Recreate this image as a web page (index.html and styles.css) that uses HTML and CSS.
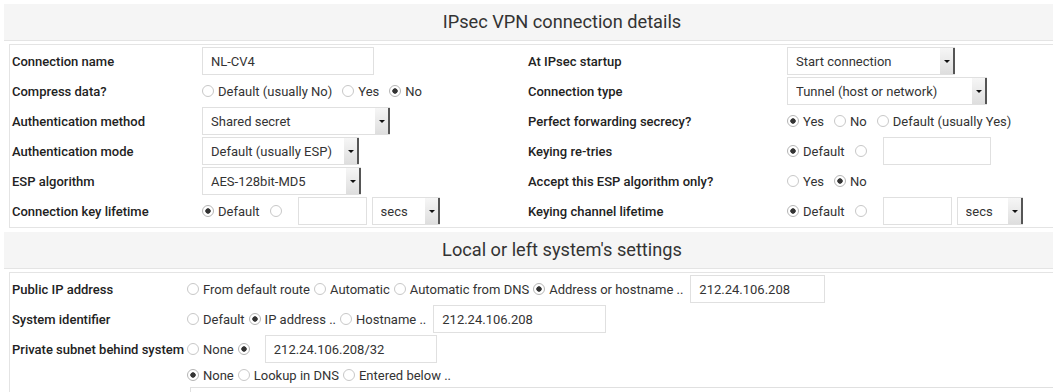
FILE: index.html
```html
<!DOCTYPE html>
<html>
<head>
<meta charset="utf-8">
<link rel="stylesheet" href="styles.css">
</head>
<body>
<div class="page">
  <div class="sec-head">IPsec VPN connection details</div>
  <div class="panel">
    <div class="grid grid-main">
      <div class="lbl">Connection name</div>
      <div class="val"><input class="txt w-name" type="text" value="NL-CV4"></div>
      <div class="lbl">At IPsec startup</div>
      <div class="val"><span class="sel w-start"><select><option>Start connection</option></select><span class="arrow"></span></span></div>

      <div class="lbl">Compress data?</div>
      <div class="val opts">
        <label class="opt"><input type="radio" name="comp">Default (usually No)</label>
        <label class="opt"><input type="radio" name="comp">Yes</label>
        <label class="opt"><input type="radio" name="comp" checked>No</label>
      </div>
      <div class="lbl">Connection type</div>
      <div class="val"><span class="sel w-tunnel"><select><option>Tunnel (host or network)</option></select><span class="arrow"></span></span></div>

      <div class="lbl">Authentication method</div>
      <div class="val"><span class="sel w-auth"><select><option>Shared secret</option></select><span class="arrow"></span></span></div>
      <div class="lbl">Perfect forwarding secrecy?</div>
      <div class="val opts">
        <label class="opt"><input type="radio" name="pfs" checked>Yes</label>
        <label class="opt"><input type="radio" name="pfs">No</label>
        <label class="opt"><input type="radio" name="pfs">Default (usually Yes)</label>
      </div>

      <div class="lbl">Authentication mode</div>
      <div class="val"><span class="sel w-mode"><select><option>Default (usually ESP)</option></select><span class="arrow"></span></span></div>
      <div class="lbl">Keying re-tries</div>
      <div class="val opts">
        <label class="opt"><input type="radio" name="kr" checked>Default</label>
        <label class="opt opt-last"><input type="radio" name="kr"></label>
        <input class="txt w-retries" type="text" value="">
      </div>

      <div class="lbl">ESP algorithm</div>
      <div class="val"><span class="sel w-esp"><select><option>AES-128bit-MD5</option></select><span class="arrow"></span></span></div>
      <div class="lbl">Accept this ESP algorithm only?</div>
      <div class="val opts">
        <label class="opt"><input type="radio" name="acc">Yes</label>
        <label class="opt"><input type="radio" name="acc" checked>No</label>
      </div>

      <div class="lbl">Connection key lifetime</div>
      <div class="val opts">
        <label class="opt"><input type="radio" name="ckl" checked>Default</label>
        <label class="opt opt-last"><input type="radio" name="ckl"></label>
        <input class="txt w-life" type="text" value="">
        <span class="sel w-secs"><select><option>secs</option></select><span class="arrow"></span></span>
      </div>
      <div class="lbl">Keying channel lifetime</div>
      <div class="val opts">
        <label class="opt"><input type="radio" name="kcl" checked>Default</label>
        <label class="opt opt-last"><input type="radio" name="kcl"></label>
        <input class="txt w-life" type="text" value="">
        <span class="sel w-secs2"><select><option>secs</option></select><span class="arrow"></span></span>
      </div>
    </div>
  </div>

  <div class="sec-head">Local or left system's settings</div>
  <div class="panel">
    <div class="grid grid-local">
      <div class="lbl">Public IP address</div>
      <div class="val tight">
        <label class="opt"><input type="radio" name="pip">From default route</label>
        <label class="opt"><input type="radio" name="pip">Automatic</label>
        <label class="opt"><input type="radio" name="pip">Automatic from DNS</label>
        <label class="opt"><input type="radio" name="pip" checked>Address or hostname ..</label>
        <input class="txt w-pip" type="text" value="212.24.106.208">
      </div>

      <div class="lbl">System identifier</div>
      <div class="val tight">
        <label class="opt"><input type="radio" name="sid">Default</label>
        <label class="opt"><input type="radio" name="sid" checked>IP address ..</label>
        <label class="opt"><input type="radio" name="sid">Hostname ..</label>
        <input class="txt w-sid" type="text" value="212.24.106.208">
      </div>

      <div class="lbl">Private subnet behind system</div>
      <div class="val tight">
        <label class="opt"><input type="radio" name="ps">None</label>
        <label class="opt opt-last"><input type="radio" name="ps" checked></label>
        <input class="txt w-sub" type="text" value="212.24.106.208/32">
      </div>

      <div class="lbl"></div>
      <div class="val tight">
        <label class="opt"><input type="radio" name="nh" checked>None</label>
        <label class="opt"><input type="radio" name="nh">Lookup in DNS</label>
        <label class="opt"><input type="radio" name="nh">Entered below ..</label>
      </div>

      <div class="lbl"></div>
      <div class="val area-cell"><textarea class="area"></textarea></div>
    </div>
  </div>
</div>
</body>
</html>
```

FILE: styles.css
```css
html, body {
  margin: 0;
  padding: 0;
  overflow: hidden;
  background: #fff;
}

body {
  font-family: Roboto, "Liberation Sans", Arial, sans-serif;
  font-size: 13px;
  color: #333;
}

.page {
  width: 1116px;
  padding: 4px 0 0 4px;
}

.sec-head {
  height: 36px;
  line-height: 36px;
  background: #f5f5f5;
  border-bottom: 1px solid #e4e4e4;
  text-align: center;
  font-size: 18.2px;
  color: #333;
}

.panel {
  margin: 3px 5px 4px;
  border: 1px solid #e4e4e4;
  padding: 1px 0;
}

.grid {
  display: grid;
  grid-auto-rows: 30px;
}

.grid-main {
  grid-template-columns: 190px 326px 259px 1fr;
}

.grid-local {
  grid-template-columns: 175px 1fr;
  grid-template-rows: 30px 30px 30px 22px auto;
}

.lbl {
  display: flex;
  align-items: center;
  padding-left: 2px;
  font-weight: 500;
  color: #222;
  white-space: nowrap;
}

.val {
  display: flex;
  align-items: center;
  padding-left: 2px;
  white-space: nowrap;
}

.opt {
  display: inline-flex;
  align-items: center;
  margin-right: 10px;
}

.opt-last {
  margin-right: 12px;
}

.tight .opt {
  margin-right: 4px;
}

.tight .opt-last {
  margin-right: 11px;
}

.tight .txt {
  margin-left: 3px;
}

.tight .opt-last + .txt {
  margin-left: 0;
}

input[type="radio"] {
  appearance: none;
  -webkit-appearance: none;
  width: 12px;
  height: 12px;
  margin: 0 4px 0 0;
  border: 1px solid #c8c8c8;
  border-radius: 50%;
  background: #fff;
  box-sizing: border-box;
  flex: none;
}

input[type="radio"]:checked {
  border-color: #b5b5b5;
  background: radial-gradient(circle, #333 0 2.4px, #fff 3px);
}

.txt {
  box-sizing: border-box;
  height: 28px;
  border: 1px solid #e0e0e0;
  padding: 0 8px;
  font: inherit;
  color: #333;
  margin: 0;
  outline: none;
}

.sel {
  position: relative;
  display: inline-block;
  height: 28px;
  box-sizing: border-box;
  border: 1px solid #e0e0e0;
  border-right: none;
}

.sel select {
  appearance: none;
  -webkit-appearance: none;
  border: none;
  background: transparent;
  font: inherit;
  color: #333;
  height: 26px;
  width: 100%;
  padding: 0 18px 0 8px;
  margin: 0;
  outline: none;
}

.arrow {
  position: absolute;
  top: 0;
  right: 0;
  bottom: 0;
  width: 13px;
  background: linear-gradient(#f6f6f6, #dedede);
  border-right: 2px solid #555;
}

.arrow::after {
  content: "";
  position: absolute;
  left: 4px;
  top: 50%;
  margin-top: -1px;
  border-left: 3px solid transparent;
  border-right: 3px solid transparent;
  border-top: 3px solid #111;
}

.w-name { width: 172px; }
.w-start { width: 168px; }
.w-tunnel { width: 200px; }
.w-auth { width: 188px; }
.w-mode { width: 157px; }
.w-esp { width: 159px; }
.w-retries { width: 108px; }
.w-life { width: 69px; margin-right: 5px; }
.w-secs { width: 68px; }
.w-secs2 { width: 66px; }
.w-pip { width: 135px; }
.w-sid { width: 173px; }
.w-sub { width: 172px; }

.area-cell {
  align-items: flex-start;
  padding-left: 5px;
}

.area {
  box-sizing: border-box;
  width: 900px;
  height: 60px;
  border: 1px solid #e0e0e0;
  margin: 1px 0 0;
  resize: none;
}
```
